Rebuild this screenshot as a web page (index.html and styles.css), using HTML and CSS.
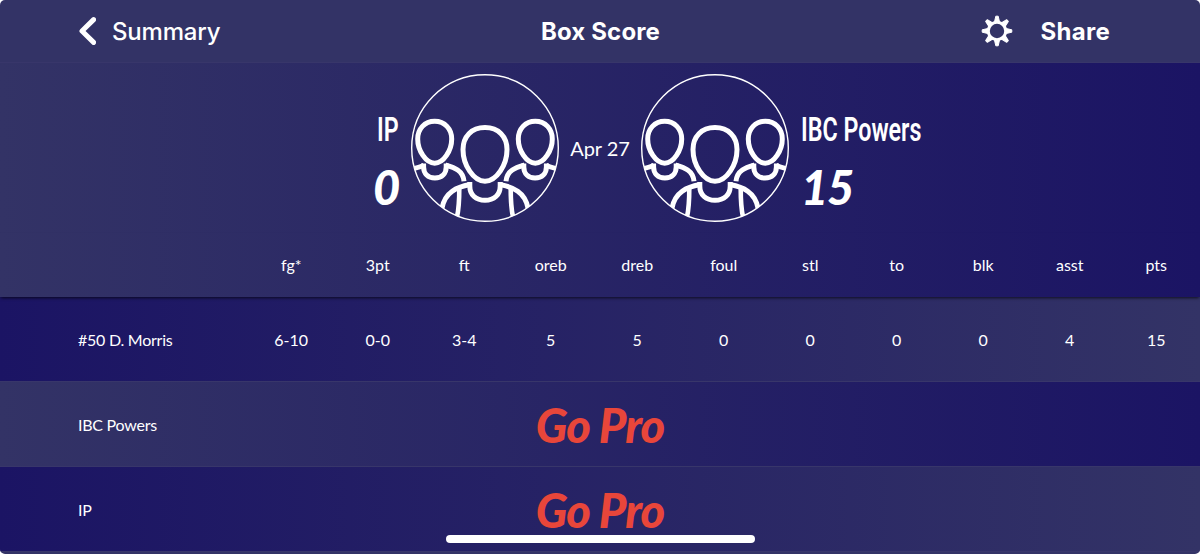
FILE: index.html
```html
<!DOCTYPE html>
<html lang="en">
<head>
    <meta charset="UTF-8">
    <meta name="viewport" content="width=device-width, initial-scale=1.0">
    <title>Box Score</title>
    <link rel="stylesheet" href="styles.css">
</head>
<body>
    <!-- shared team avatar -->
    <svg class="defs" width="0" height="0">
        <defs>
            <clipPath id="avatar-clip"><circle cx="74" cy="74" r="73.5"/></clipPath>
            <g id="side-player">
                <path d="M23.7 47.3C33.8 47.3 40.7 55 40.7 65C40.7 76.5 32.5 89.2 23.7 89.2C14.9 89.2 6.7 76.5 6.7 65C6.7 55 13.6 47.3 23.7 47.3Z"/>
                <path d="M12.6 89.5V93C12.6 99.5 17 104 23.9 104C30.8 104 35.2 99.5 35.2 93V89.5"/>
                <path d="M-1 95.5C4 94 9 93.5 13 91M34.5 91C43 93.5 52 96 53 107.3"/>
            </g>
            <symbol id="team" viewBox="0 0 148 148">
                <g clip-path="url(#avatar-clip)" fill="none" stroke="#fff" stroke-width="5">
                    <use href="#side-player"/>
                    <use href="#side-player" transform="translate(148 0) scale(-1 1)"/>
                    <path d="M74 53.6C87.5 53.6 96 62.5 96 75.5C96 91 85.5 107.3 74 107.3C62.5 107.3 52 91 52 75.5C52 62.5 60.5 53.6 74 53.6Z"/>
                    <path d="M58.8 108V112C58.8 121 65 126.3 74 126.3C83 126.3 89.2 121 89.2 112V108"/>
                    <path d="M59 110.5C46 113 34 118 31 134M89 110.5C102 113 114 118 117 134"/>
                    <path stroke-width="4.6" d="M48.3 114C48.3 124 48 134 46 143M99.7 114C99.7 124 100 134 102 143"/>
                </g>
                <circle cx="74" cy="74" r="73.3" fill="none" stroke="#fff" stroke-width="1.4"/>
            </symbol>
        </defs>
    </svg>

    <div class="screen">
        <div class="navbar">
            <div class="back">
                <svg width="18" height="30" viewBox="0 0 18 30"><path d="M15.6 3.6L4 15L15.6 26.4" fill="none" stroke="#fff" stroke-width="5" stroke-linecap="round" stroke-linejoin="round"/></svg>
                <span>Summary</span>
            </div>
            <div class="title">Box Score</div>
            <div class="actions">
                <svg width="32" height="32" viewBox="-16 -16 32 32">
                    <circle r="8.7" fill="none" stroke="#fff" stroke-width="3"/>
                    <g fill="#fff" stroke="#fff" stroke-width="1" stroke-linejoin="round">
                        <path id="tooth" d="M-2.5 -9.2L-1.2 -14.8H1.2L2.5 -9.2Z"/>
                        <use href="#tooth" transform="rotate(45)"/>
                        <use href="#tooth" transform="rotate(90)"/>
                        <use href="#tooth" transform="rotate(135)"/>
                        <use href="#tooth" transform="rotate(180)"/>
                        <use href="#tooth" transform="rotate(225)"/>
                        <use href="#tooth" transform="rotate(270)"/>
                        <use href="#tooth" transform="rotate(315)"/>
                    </g>
                </svg>
                <span class="share">Share</span>
            </div>
        </div>

        <div class="scoreboard">
            <div class="team home">
                <div class="team-name">IP</div>
                <div class="score">0</div>
            </div>
            <svg class="avatar"><use href="#team"/></svg>
            <div class="date">Apr 27</div>
            <svg class="avatar"><use href="#team"/></svg>
            <div class="team away">
                <div class="team-name">IBC Powers</div>
                <div class="score">15</div>
            </div>
        </div>

        <div class="row head">
            <div></div>
            <div>fg*</div>
            <div>3pt</div>
            <div>ft</div>
            <div>oreb</div>
            <div>dreb</div>
            <div>foul</div>
            <div>stl</div>
            <div>to</div>
            <div>blk</div>
            <div>asst</div>
            <div>pts</div>
        </div>
        <div class="row dark">
            <div class="name">#50 D. Morris</div>
            <div>6-10</div>
            <div>0-0</div>
            <div>3-4</div>
            <div>5</div>
            <div>5</div>
            <div>0</div>
            <div>0</div>
            <div>0</div>
            <div>0</div>
            <div>4</div>
            <div>15</div>
        </div>
        <div class="row pro">
            <div class="name">IBC Powers</div>
            <div class="go-pro">Go Pro</div>
        </div>
        <div class="row dark pro">
            <div class="name">IP</div>
            <div class="go-pro">Go Pro</div>
        </div>
        <div class="home-bar"></div>
    </div>
</body>
</html>
```

FILE: styles.css
```css
body {
    margin: 0;
    background-color: #fff;
    color: #fff;
    font-family: Lato, sans-serif;
}

.defs {
    position: absolute;
}

.screen {
    position: relative;
    width: 1200px;
    height: 554px;
    overflow: hidden;
    border-radius: 5px;
    background-color: #333366;
}

.navbar {
    display: grid;
    grid-template-columns: 1fr auto 1fr;
    align-items: center;
    height: 63px;
    padding: 0 90px 0 78px;
    border-bottom: 1px solid #38366a;
    box-sizing: border-box;
    font-family: Inter, sans-serif;
    font-size: 24px;
    font-weight: 700;
}

.back {
    display: flex;
    align-items: center;
    gap: 16px;
    font-weight: 500;
    letter-spacing: -0.2px;
}

.title {
    margin-left: 13px;
    letter-spacing: 0.15px;
}

.actions {
    display: flex;
    align-items: center;
    justify-content: flex-end;
    gap: 27px;
}

.share {
    letter-spacing: 0.3px;
}

.scoreboard {
    display: flex;
    align-items: center;
    height: 170px;
    background: linear-gradient(to right, #333366, #1b1464);
}

.avatar {
    width: 148px;
    height: 148px;
}

.team {
    flex: 1;
    display: flex;
    flex-direction: column;
    padding: 29px 12px 0;
}

.home {
    align-items: flex-end;
}

.team-name {
    font-family: "Roboto", sans-serif;
    font-size: 33px;
    font-weight: 600;
    line-height: 40px;
    white-space: nowrap;
    transform: scaleX(0.705);
    transform-origin: left;
}

.home .team-name {
    transform-origin: right;
}

.score {
    margin-top: 9px;
    font-size: 47px;
    font-weight: 900;
    font-style: italic;
    line-height: 56px;
    letter-spacing: -1.2px;
}

.date {
    width: 82px;
    text-align: center;
    font-size: 20px;
    letter-spacing: -0.1px;
}

.row {
    position: relative;
    display: grid;
    grid-template-columns: 248px repeat(11, 86.5px);
    align-items: center;
    height: 85px;
    border-bottom: 1px solid #38366a;
    box-sizing: border-box;
    background: linear-gradient(to right, #333366, #1b1464);
    font-size: 16px;
    text-align: center;
}

.row.dark {
    background: linear-gradient(to right, #1b1464, #333366);
}

.row.head {
    z-index: 1;
    height: 64px;
    padding-bottom: 2px;
    border-bottom: none;
    box-shadow: 0 2px 3px -1px rgba(0, 0, 0, 0.7);
}

.row .name {
    padding-left: 78px;
    text-align: left;
    letter-spacing: -0.25px;
}

.row.pro {
    grid-template-columns: 248px 704px 1fr;
}

.go-pro {
    padding-top: 2px;
    color: #e8463a;
    font-size: 47px;
    font-weight: 900;
    font-style: italic;
    line-height: 56px;
    letter-spacing: -1px;
}

/* phone home indicator */
.home-bar {
    position: absolute;
    left: 446px;
    bottom: 11px;
    width: 309px;
    height: 8px;
    border-radius: 4px;
    background-color: #fff;
}
```
